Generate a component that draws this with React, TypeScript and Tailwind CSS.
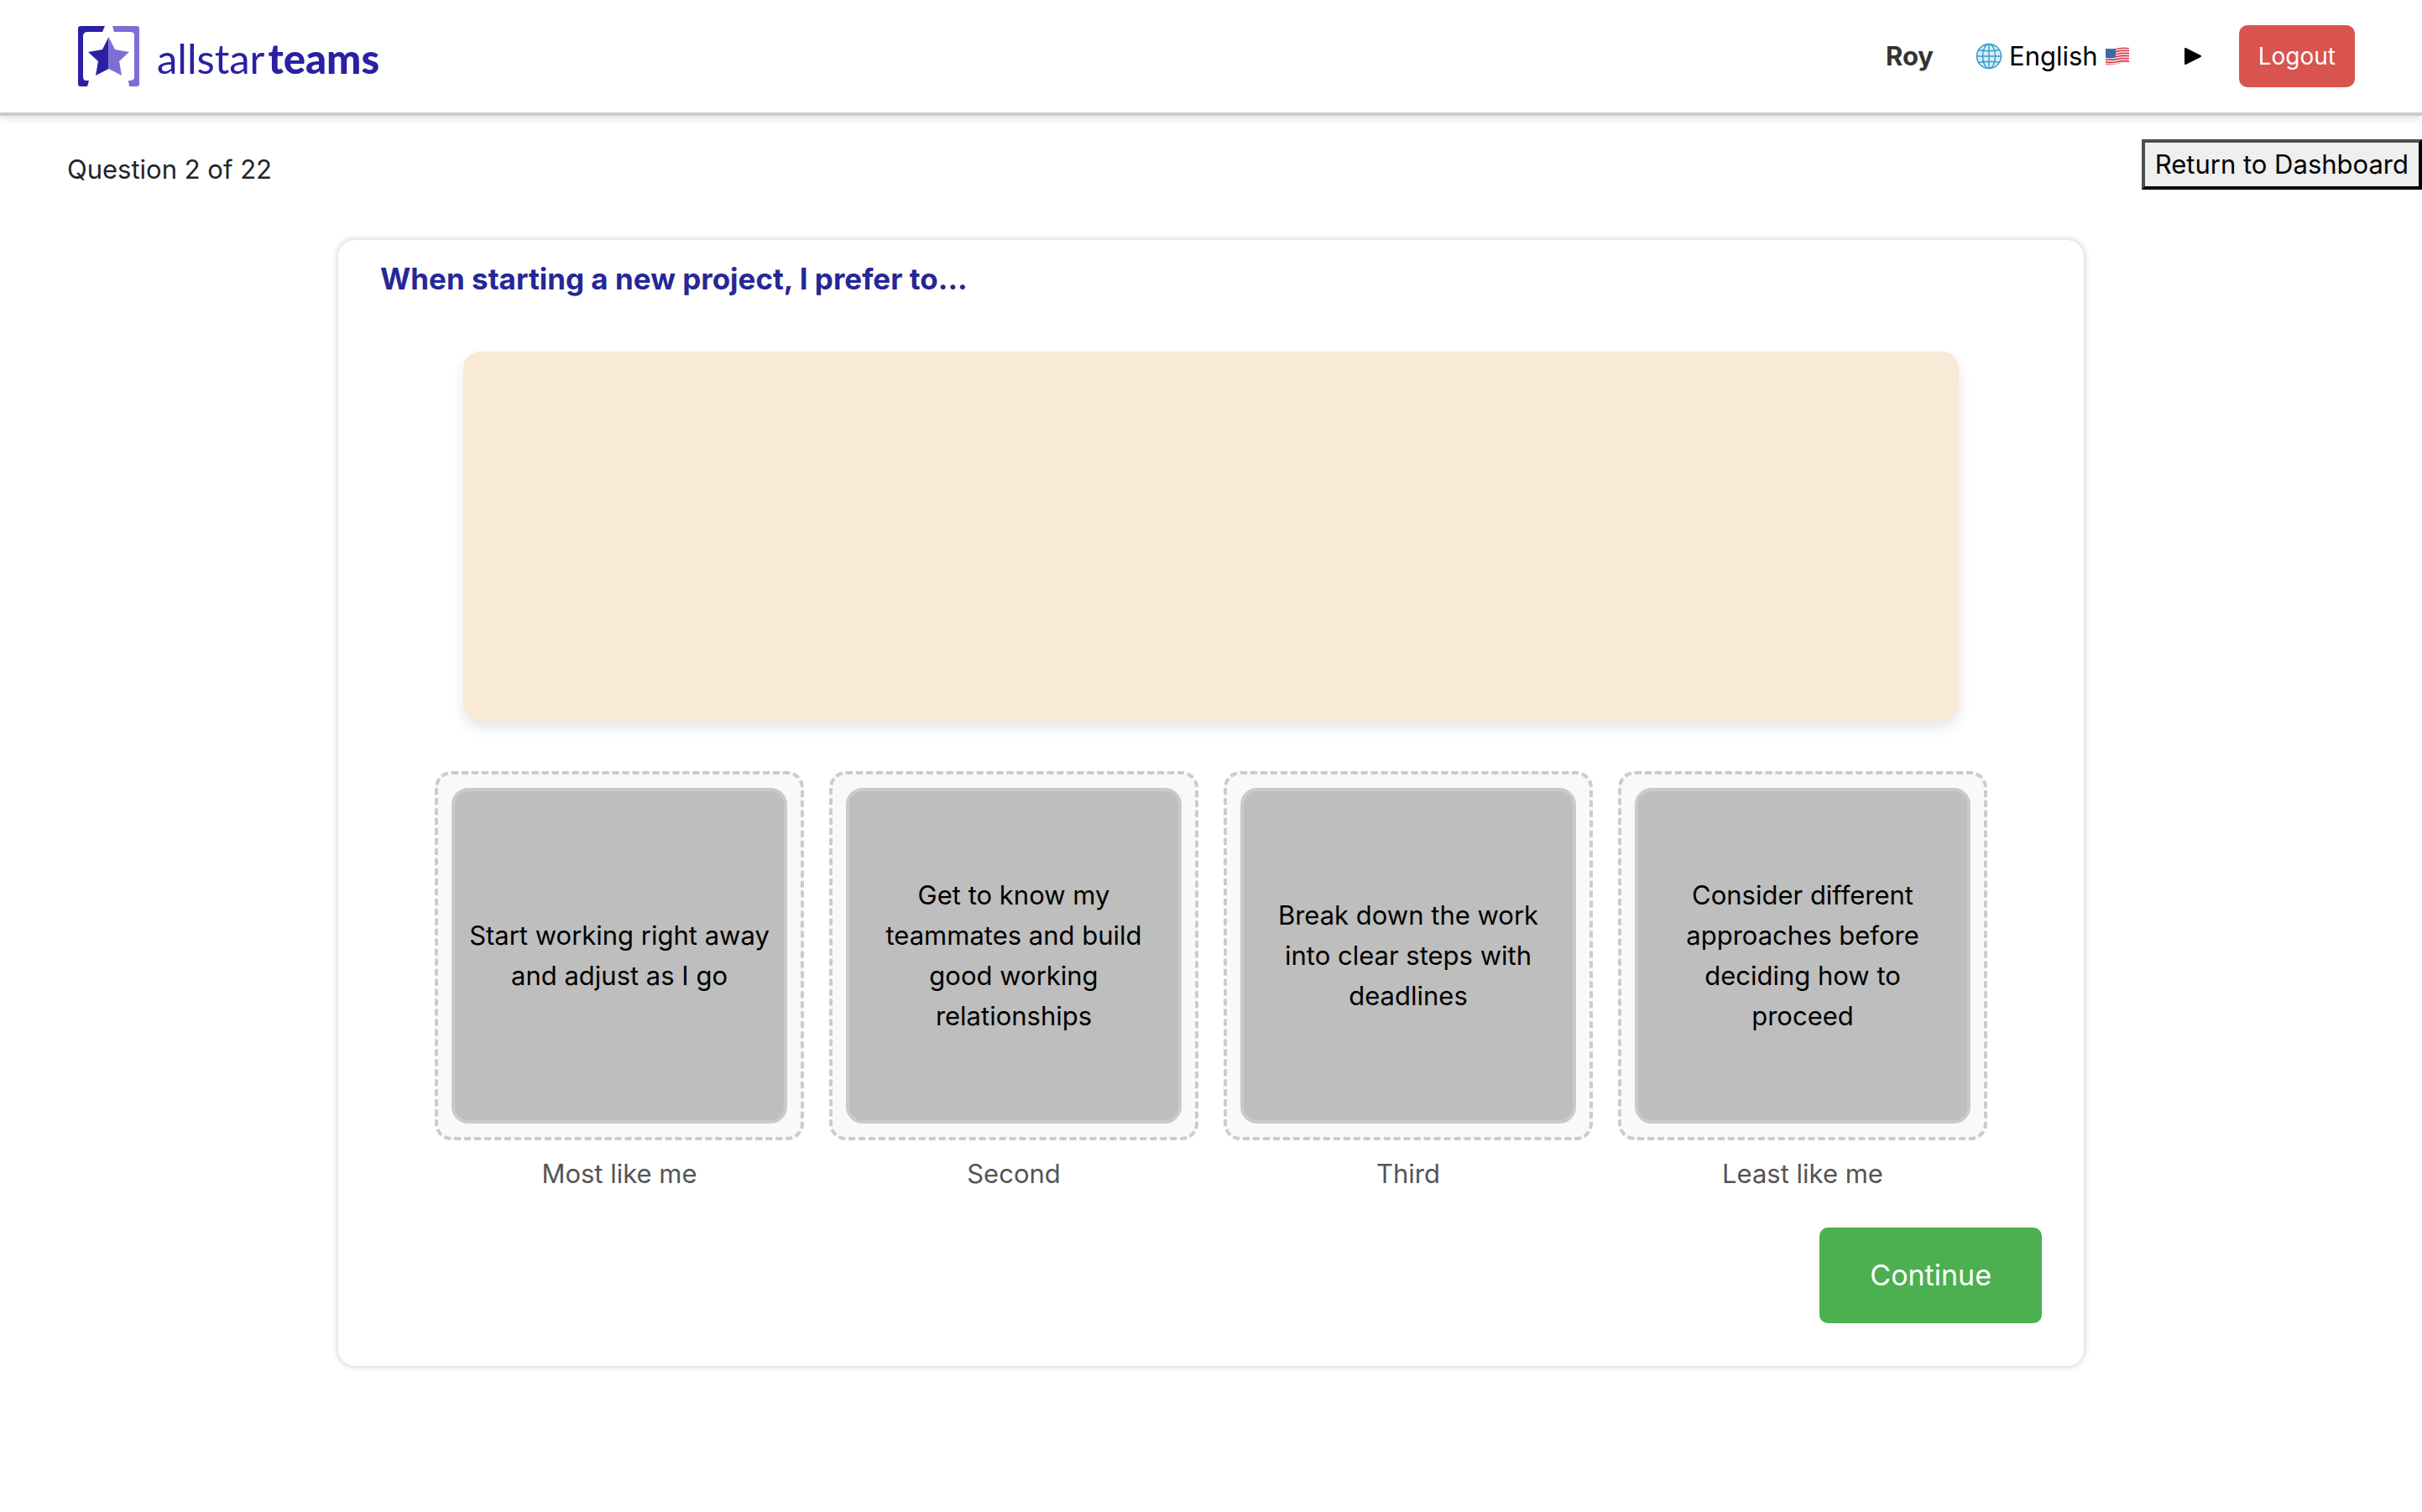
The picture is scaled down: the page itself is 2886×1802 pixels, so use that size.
const slots = [
  { label: "Most like me", text: "Start working right away and adjust as I go" },
  { label: "Second", text: "Get to know my teammates and build good working relationships" },
  { label: "Third", text: "Break down the work into clear steps with deadlines" },
  { label: "Least like me", text: "Consider different approaches before deciding how to proceed" },
];

function LogoMark() {
  return (
    <svg width="74" height="72" viewBox="0 0 74 72" aria-hidden="true">
      <path fill="#2b20a4" d="M32 0H3Q0 0 0 3V69Q0 72 3 72H11L13 65H9Q6 64 6 61V11Q7 7 11 7H29Z" />
      <path fill="#7f6dd6" d="M41 0H70Q73 0 73 3V69Q73 72 70 72H61L60 65H63Q67 64 67 61V11Q67 7 62 7H43Z" />
      <path fill="#2b20a4" d="M36.500 13L29 28L12 31L24 42L21 59L36.500 51Z" />
      <path fill="#7f6dd6" d="M36.500 13L44 28L61 31L49 42L52 59L36.500 51Z" />
    </svg>
  );
}

function Globe() {
  return (
    <svg width="32" height="32" viewBox="0 0 32 32" fill="none" stroke="#3a9cc4" strokeWidth="1.500" aria-hidden="true">
      <circle cx="16" cy="16" r="14.500" fill="#d3effa" />
      <ellipse cx="16" cy="16" rx="7.500" ry="14.500" />
      <path d="M16 1.500V30.500M1.500 16H30.500M4 8.500Q16 11 28 8.500M4 23.500Q16 21 28 23.500" />
    </svg>
  );
}

function Flag() {
  return (
    <svg width="30" height="22" viewBox="0 0 30 22" aria-hidden="true">
      <clipPath id="wave">
        <path d="M1 2Q8 3 15 1.500T29 1V19Q22 18 15 20T1 21Z" />
      </clipPath>
      <g clipPath="url(#wave)">
        <rect width="30" height="22" fill="#f4eeee" />
        <path
          fill="none"
          stroke="#d8364a"
          strokeWidth="1.600"
          d="M0 2.500Q8 3.500 15 2T30 1.500M0 5.600Q8 6.600 15 5.100T30 4.600M0 8.700Q8 9.700 15 8.200T30 7.700M0 11.800Q8 12.800 15 11.300T30 10.800M0 14.900Q8 15.900 15 14.400T30 13.900M0 18Q8 19 15 17.500T30 17M0 21Q8 22 15 20.500T30 20"
        />
        <path fill="#3c6aa6" d="M0 0H13V12.500Q8 14 0 13Z" />
      </g>
    </svg>
  );
}

export default function App() {
  return (
    <div className="min-h-screen bg-white font-['Inter',sans-serif] text-[31px] leading-[48px] text-black">
      <header className="flex h-[138px] items-center justify-between border-b-4 border-[#cccccc] pr-20 pl-[93px] shadow-[0_4px_8px_rgba(0,0,0,0.1)]">
        <a href="#home" aria-label="allstarteams" className="flex items-center gap-5">
          <LogoMark />
          <span className="flex gap-1 pt-1 font-['Lato',sans-serif] text-[49px] leading-[56px] text-[#2b20a4]">
            <span>allstar</span>
            <span className="font-black">teams</span>
          </span>
        </a>
        <div className="flex items-center">
          <span className="font-bold text-[#333333]">Roy</span>
          <button type="button" className="ml-[50px] flex items-center gap-2">
            <Globe />
            English
            <Flag />
          </button>
          <button type="button" aria-label="Play" className="ml-16">
            <svg width="22" height="22" viewBox="0 0 22 22" aria-hidden="true">
              <path d="M2 2L20 11L2 20Z" stroke="black" strokeWidth="2" strokeLinejoin="round" />
            </svg>
          </button>
          <button type="button" className="ml-11 h-[74px] rounded-[10px] bg-[#d9534f] px-[23px] text-[28px] text-white">
            Logout
          </button>
        </div>
      </header>

      <main>
        <div className="flex items-end justify-between pt-7 pl-20">
          <p className="text-[#212529]">Question 2 of 22</p>
          <button type="button" className="h-[60px] border-4 border-t-[#4d4d4d] border-r-black border-b-black border-l-[#4d4d4d] bg-[#efefef] px-3">
            Return to Dashboard
          </button>
        </div>

        <section className="mx-auto mt-[60px] flex max-w-[2080px] flex-col rounded-[20px] bg-white px-[50px] pt-[19px] pb-[51px] shadow-[0_0_6px_2px_rgba(0,0,0,0.15)]">
          <h1 className="text-[35px] leading-[54px] font-bold text-[#262796]">When starting a new project, I prefer to...</h1>
          <div className="mx-auto mt-[60px] h-[440px] w-[90%] rounded-[20px] bg-[#f9e9d7] shadow-[0_8px_16px_rgba(0,0,0,0.1)]" />
          <ol className="mt-[60px] flex justify-center gap-[30px]">
            {slots.map((slot) => (
              <li key={slot.label} className="w-[440px] text-center">
                <div className="rounded-[20px] border-4 border-dashed border-[#cccccc] bg-[#f9f9f9] p-4">
                  <div className="flex h-[400px] items-center justify-center rounded-[20px] border-4 border-[#cacaca] bg-[#bebebe] px-4">
                    {slot.text}
                  </div>
                </div>
                <p className="mt-4 text-[#555555]">{slot.label}</p>
              </li>
            ))}
          </ol>
          <button type="button" className="mt-10 self-end rounded-[10px] bg-[#4caf50] px-[60px] py-[30px] text-[34px] leading-[54px] text-white">
            Continue
          </button>
        </section>
      </main>
    </div>
  );
}
